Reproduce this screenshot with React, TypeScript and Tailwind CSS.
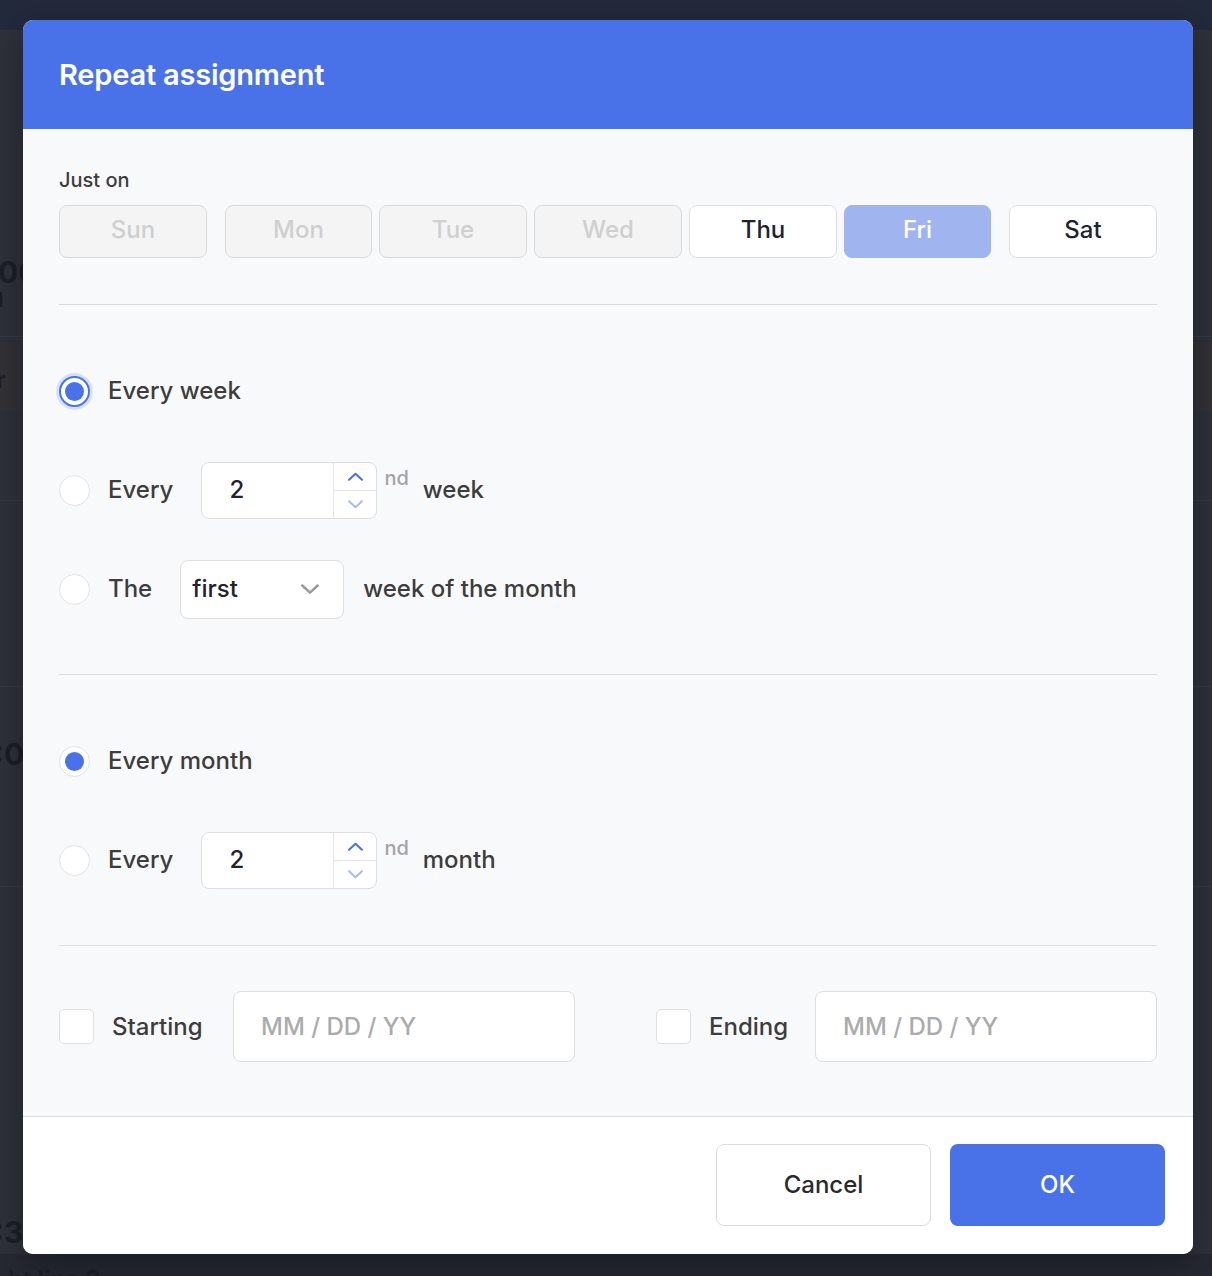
const FONT = { fontFamily: 'Inter, "Noto Sans", sans-serif' };

const DAYS = [
  { d: 'Sun', state: 'off', cls: 'w-[148px]' },
  { d: 'Mon', state: 'off', cls: 'w-[147px] ml-[18px]' },
  { d: 'Tue', state: 'off', cls: 'w-[148px] ml-[7px]' },
  { d: 'Wed', state: 'off', cls: 'w-[148px] ml-[7px]' },
  { d: 'Thu', state: 'on', cls: 'w-[148px] ml-[7px]' },
  { d: 'Fri', state: 'sel', cls: 'w-[147px] ml-[7px]' },
  { d: 'Sat', state: 'on', cls: 'w-[148px] ml-[18px]' },
];

function Radio({ checked, focus }: { checked?: boolean; focus?: boolean }) {
  if (checked && focus) {
    return (
      <span className="flex h-[31px] w-[31px] shrink-0 items-center justify-center rounded-full border-2 border-[#4a72e8] bg-white shadow-[0_0_0_3px_rgba(74,114,232,0.18)]">
        <span className="h-[19px] w-[19px] rounded-full bg-[#4a72e8]" />
      </span>
    );
  }
  return (
    <span className="flex h-[31px] w-[31px] shrink-0 items-center justify-center rounded-full border border-[#e3e3e3] bg-white">
      {checked && <span className="h-[19px] w-[19px] rounded-full bg-[#4a72e8]" />}
    </span>
  );
}

function Chevron({ dir, color, size }: { dir: 'up' | 'down'; color: string; size: number }) {
  return (
    <svg width={size} height={size * 0.6} viewBox="0 0 14 8" fill="none">
      <path
        d={dir === 'up' ? 'M1 7L7 1.5L13 7' : 'M1 1L7 6.5L13 1'}
        stroke={color}
        strokeWidth="2"
        strokeLinecap="round"
        strokeLinejoin="round"
      />
    </svg>
  );
}

function NumberBox() {
  return (
    <div className="flex h-[57px] w-[176px] overflow-hidden rounded-[8px] border border-[#dedede] bg-white">
      <div className="flex flex-1 items-center pl-[27px] text-[24px] font-medium text-[#1f2330]">2</div>
      <div className="flex w-[43px] flex-col border-l border-[#e3e3e3]">
        <div className="flex flex-1 items-center justify-center border-b border-[#e3e3e3]">
          <Chevron dir="up" color="#4a72e8" size={15} />
        </div>
        <div className="flex flex-1 items-center justify-center">
          <Chevron dir="down" color="#a9bdf5" size={15} />
        </div>
      </div>
    </div>
  );
}

function Label({ children }: { children: React.ReactNode }) {
  return <span className="text-[24px] font-medium text-[#3d3d3d]">{children}</span>;
}

function Divider() {
  return <div className="h-px bg-[#dcdcdc]" />;
}

export default function App() {
  return (
    <div className="relative h-[1276px] w-[1212px] overflow-hidden bg-[#2f323b]" style={FONT}>
      {/* page under the overlay */}
      <div className="absolute inset-x-0 top-0 h-[30px] bg-[#232a3c]" />
      <div className="absolute left-0 top-[336px] h-px w-full bg-[#3a3d46]" />
      <div className="absolute left-0 top-[344px] h-[66px] w-full bg-[#333338]" />
      <div className="absolute left-0 top-[500px] h-px w-full bg-[#383b44]" />
      <div className="absolute left-0 top-[686px] h-px w-full bg-[#383b44]" />
      <div className="absolute left-0 top-[886px] h-px w-full bg-[#383b44]" />
      <div className="absolute bottom-0 left-0 h-[22px] w-full bg-[#262933]" />
      <span className="absolute left-[-2px] top-[250px] text-[30px] font-bold text-[#1c1f28]">00</span>
      <span className="absolute left-[-2px] top-[285px] text-[20px] font-bold text-[#1c1f28]">l</span>
      <span className="absolute left-[-4px] top-[362px] text-[24px] font-bold text-[#1c1f28]">r</span>
      <span className="absolute left-[-6px] top-[732px] text-[30px] font-bold text-[#1c1f28]">:0</span>
      <span className="absolute left-[-6px] top-[1210px] text-[30px] font-bold text-[#1c1f28]">:30</span>
      <span className="absolute left-[8px] top-[1262px] text-[24px] font-bold text-[#1c1f28]">ht  line 2</span>

      <div className="relative ml-[23px] mt-[20px] w-[1170px] overflow-hidden rounded-[10px] bg-[#f8f9fb] shadow-[0_10px_40px_rgba(0,0,0,0.35)]">
        <div className="flex h-[109px] items-center bg-[#4a72e8] px-[36px]">
          <h1 className="text-[29px] font-semibold tracking-[-0.2px] text-white">Repeat assignment</h1>
        </div>

        <div className="px-[36px] pb-[54px] pt-[37px]">
          <p className="text-[20px] font-medium leading-[28px] text-[#3d3d3d]">Just on</p>
          <div className="mt-[11px] flex">
            {DAYS.map((x) => (
              <div
                key={x.d}
                className={
                  'flex h-[53px] items-center justify-center rounded-[8px] border pb-[3px] text-[24px] font-medium ' +
                  x.cls +
                  ' ' +
                  (x.state === 'off'
                    ? 'border-[#dadada] bg-[#f4f4f4] text-[#cfcfcf]'
                    : x.state === 'sel'
                      ? 'border-[#a0b4f0] bg-[#a0b4f0] text-white'
                      : 'border-[#dedede] bg-white text-[#1f2330]')
                }
              >
                {x.d}
              </div>
            ))}
          </div>

          <div className="mt-[46px]">
            <Divider />
          </div>

          <div className="mt-[57px] flex flex-col gap-[41px]">
            <div className="flex h-[58px] items-center gap-[18px]">
              <Radio checked focus />
              <Label>Every week</Label>
            </div>
            <div className="flex h-[58px] items-center">
              <Radio />
              <span className="ml-[18px]">
                <Label>Every</Label>
              </span>
              <div className="ml-[28px]">
                <NumberBox />
              </div>
              <span className="mb-[24px] ml-[7px] text-[20px] font-medium text-[#a3a3a3]">nd</span>
              <span className="ml-[14px]">
                <Label>week</Label>
              </span>
            </div>
            <div className="flex h-[58px] items-center">
              <Radio />
              <span className="ml-[18px]">
                <Label>The</Label>
              </span>
              <div className="ml-[28px] flex h-[59px] w-[164px] items-center justify-between rounded-[8px] border border-[#dedede] bg-white pl-[11px] pr-[24px]">
                <span className="text-[24px] font-medium text-[#1f2330]">first</span>
                <Chevron dir="down" color="#9b9b9b" size={18} />
              </div>
              <span className="ml-[19px]">
                <Label>week of the month</Label>
              </span>
            </div>
          </div>

          <div className="mt-[56px]">
            <Divider />
          </div>

          <div className="mt-[57px] flex flex-col gap-[41px]">
            <div className="flex h-[58px] items-center gap-[18px]">
              <Radio checked />
              <Label>Every month</Label>
            </div>
            <div className="flex h-[58px] items-center">
              <Radio />
              <span className="ml-[18px]">
                <Label>Every</Label>
              </span>
              <div className="ml-[28px]">
                <NumberBox />
              </div>
              <span className="mb-[24px] ml-[7px] text-[20px] font-medium text-[#a3a3a3]">nd</span>
              <span className="ml-[14px]">
                <Label>month</Label>
              </span>
            </div>
          </div>

          <div className="mt-[56px]">
            <Divider />
          </div>

          <div className="mt-[45px] flex items-center justify-between">
            <div className="flex items-center">
              <span className="h-[35px] w-[35px] rounded-[5px] border border-[#e0e0e0] bg-white" />
              <span className="ml-[18px] w-[93px]">
                <Label>Starting</Label>
              </span>
              <div className="ml-[28px] flex h-[71px] w-[342px] items-center rounded-[8px] border border-[#dedede] bg-white pl-[27px] text-[24px] font-medium text-[#ababab]">
                MM / DD / YY
              </div>
            </div>
            <div className="flex items-center">
              <span className="h-[35px] w-[35px] rounded-[5px] border border-[#e0e0e0] bg-white" />
              <span className="ml-[18px] w-[78px]">
                <Label>Ending</Label>
              </span>
              <div className="ml-[28px] flex h-[71px] w-[342px] items-center rounded-[8px] border border-[#dedede] bg-white pl-[27px] text-[24px] font-medium text-[#ababab]">
                MM / DD / YY
              </div>
            </div>
          </div>
        </div>

        <div className="flex justify-end gap-[19px] border-t border-[#dcdcdc] bg-white pb-[28px] pl-[36px] pr-[28px] pt-[27px]">
          <button className="h-[82px] w-[215px] rounded-[8px] border border-[#dcdcdc] bg-white text-[24px] font-medium text-[#2b2b2b]">
            Cancel
          </button>
          <button className="h-[82px] w-[215px] rounded-[8px] bg-[#4a72e8] text-[24px] font-medium text-white">
            OK
          </button>
        </div>
      </div>
    </div>
  );
}
